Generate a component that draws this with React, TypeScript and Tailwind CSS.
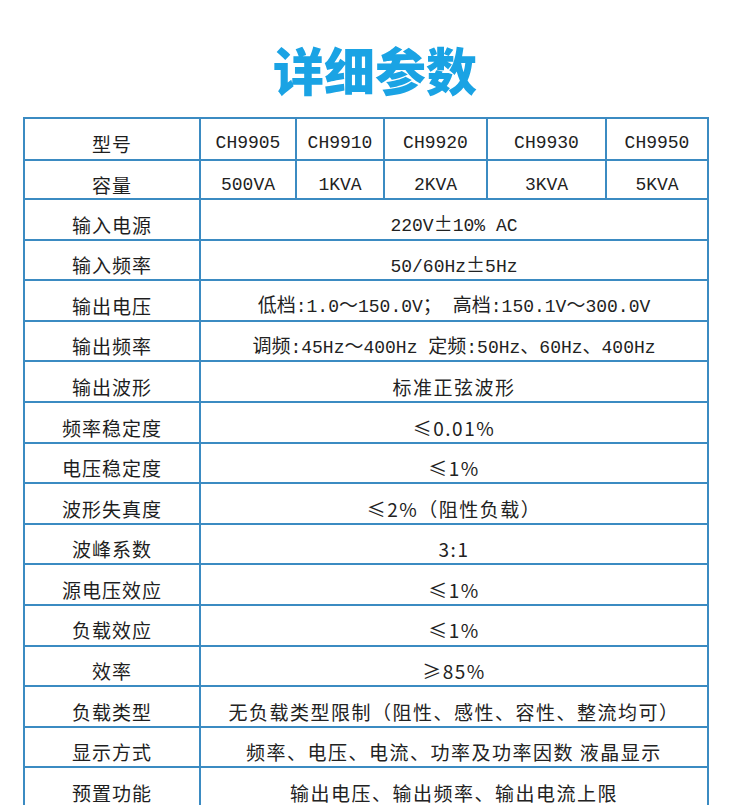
import React from "react";

const B = "border-[#3b8bc2]";

const rows: { label: string; value: React.ReactNode; sans?: boolean }[] = [
  { label: "输入电源", value: <>220V<span className="cjk">±</span>10% AC</> },
  { label: "输入频率", value: <>50/60Hz<span className="cjk">±</span>5Hz</> },
  {
    label: "输出电压",
    value: (
      <>
        <span className="cjk">低档</span>:1.0<span className="cjk">～</span>150.0V
        <span className="cjk inline-block w-[30px]">；</span>
        <span className="cjk">高档</span>:150.1V<span className="cjk">～</span>300.0V
      </>
    ),
  },
  {
    label: "输出频率",
    value: (
      <>
        <span className="cjk">调频</span>:45Hz<span className="cjk">～</span>400Hz <span className="cjk">定频</span>:50Hz<span className="cjk">、</span>60Hz<span className="cjk">、</span>400Hz
      </>
    ),
  },
  { label: "输出波形", value: "标准正弦波形", sans: true },
  { label: "频率稳定度", value: "≤0.01%", sans: true },
  { label: "电压稳定度", value: "≤1%", sans: true },
  { label: "波形失真度", value: "≤2%（阻性负载）", sans: true },
  { label: "波峰系数", value: "3:1", sans: true },
  { label: "源电压效应", value: "≤1%", sans: true },
  { label: "负载效应", value: "≤1%", sans: true },
  { label: "效率", value: "≥85%", sans: true },
  { label: "负载类型", value: "无负载类型限制（阻性、感性、容性、整流均可）", sans: true },
  { label: "显示方式", value: "频率、电压、电流、功率及功率因数 液晶显示", sans: true },
  { label: "预置功能", value: "输出电压、输出频率、输出电流上限", sans: true },
];

const models = ["CH9905", "CH9910", "CH9920", "CH9930", "CH9950"];
const caps = ["500VA", "1KVA", "2KVA", "3KVA", "5KVA"];
const widths = ["w-[96px]", "w-[88px]", "w-[103px]", "w-[119px]", "w-[100px]"];

const sansFont = "[font-family:'Noto_Sans_CJK_SC',sans-serif]";
const monoFont = "[font-family:'Liberation_Mono','Noto_Sans_CJK_SC',monospace]";

function Label({ children }: { children: React.ReactNode }) {
  return (
    <div
      className={`w-[176px] shrink-0 border-r-2 ${B} flex items-center justify-center pt-[11px] text-[19px] tracking-[1px] text-[#1e1e1e] ${sansFont}`}
    >
      {children}
    </div>
  );
}

export default function App() {
  return (
    <div className="w-[750px] h-[805px] bg-white overflow-hidden">
      <style>{`.cjk{font-family:'Noto Sans CJK SC',sans-serif;font-size:19px;}`}</style>
      <div className="h-[117px] pt-[44px] flex justify-center">
        <div
          className={`text-[51px] leading-[51px] font-black text-[#1aa3e4] ${sansFont}`}
        >
          详细参数
        </div>
      </div>
      <div className={`ml-[23px] w-[686px] border-l-2 border-r-2 border-t-2 ${B}`}>
        <div className={`flex h-[41.5px] border-b-2 ${B}`}>
          <Label>型号</Label>
          {models.map((m, i) => (
            <div
              key={m}
              className={`${widths[i]} shrink-0 ${i < 4 ? `border-r-2 ${B}` : ""} flex items-center justify-center pt-[10px] text-[18px] text-[#222] ${monoFont}`}
            >
              {m}
            </div>
          ))}
        </div>
        <div className={`flex h-[39.5px] border-b-2 ${B}`}>
          <Label>容量</Label>
          {caps.map((m, i) => (
            <div
              key={m}
              className={`${widths[i]} shrink-0 ${i < 4 ? `border-r-2 ${B}` : ""} flex items-center justify-center pt-[13px] text-[18px] text-[#222] ${monoFont}`}
            >
              {m}
            </div>
          ))}
        </div>
        {rows.map((r) => (
          <div key={r.label} className={`flex h-[40.6px] border-b-2 ${B}`}>
            <Label>{r.label}</Label>
            <div
              className={`flex-1 flex items-center justify-center pt-[11px] text-[#222] whitespace-pre ${
                r.sans ? `${sansFont} text-[19px] tracking-[1.5px]` : `${monoFont} text-[18px]`
              }`}
            >
              <span>{r.value}</span>
            </div>
          </div>
        ))}
      </div>
    </div>
  );
}
